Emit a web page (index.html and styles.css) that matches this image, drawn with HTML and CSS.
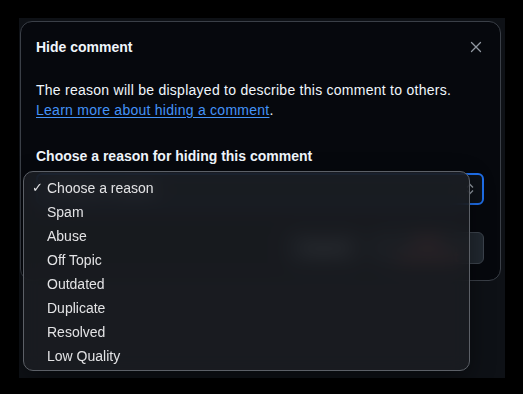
FILE: index.html
```html
<!DOCTYPE html>
<html>
<head>
<meta charset="utf-8">
<link rel="stylesheet" href="styles.css">
</head>
<body>
<div class="screen">
  <div class="dialog">
    <div class="dialog-header">
      <h2 class="dialog-title">Hide comment</h2>
      <button class="close-btn" aria-label="Close">
        <svg width="12" height="12" viewBox="0 0 12 12"><path d="M1.5 1.5 L10.5 10.5 M10.5 1.5 L1.5 10.5" stroke="#9198a1" stroke-width="1.3" stroke-linecap="round" fill="none"/></svg>
      </button>
    </div>
    <div class="dialog-body">
      <p class="desc">The reason will be displayed to describe this comment to others.<br><a href="#" class="link">Learn more about hiding a comment</a>.</p>
      <label class="field-label">Choose a reason for hiding this comment</label>
      <div class="select">
        <span class="select-text">Choose a reason</span>
        <svg class="select-arrows" width="8" height="12" viewBox="0 0 8 12"><path d="M1 4.5 L4 1.5 L7 4.5 M1 7.5 L4 10.5 L7 7.5" stroke="#9198a1" stroke-width="1.3" fill="none"/></svg>
      </div>
    </div>
    <div class="dialog-footer">
      <button class="btn">Cancel</button>
      <button class="btn btn-danger">Hide comment</button>
    </div>
  </div>
  <div class="menu">
    <div class="menu-item checked"><span class="check">✓</span>Choose a reason</div>
    <div class="menu-item">Spam</div>
    <div class="menu-item">Abuse</div>
    <div class="menu-item">Off Topic</div>
    <div class="menu-item">Outdated</div>
    <div class="menu-item">Duplicate</div>
    <div class="menu-item">Resolved</div>
    <div class="menu-item">Low Quality</div>
  </div>
</div>
</body>
</html>
```
FILE: styles.css
```css
* { box-sizing: border-box; }
html, body {
  margin: 0;
  padding: 0;
  background: #000;
  width: 523px;
  height: 394px;
  overflow: hidden;
  font-family: "Liberation Sans", Arial, sans-serif;
}
.screen {
  position: relative;
  margin: 18px 0 0 19px;
  width: 486px;
  height: 360px;
  background: #0e1116;
  padding: 3px 0 0 1px;
}
.dialog {
  width: 481px;
  height: 260px;
  background: #06080d;
  border: 1px solid #3a3f47;
  border-radius: 12px;
  display: flex;
  flex-direction: column;
}
.dialog-header {
  display: flex;
  align-items: center;
  justify-content: space-between;
  padding: 15px 14px 0 15px;
}
.dialog-title {
  margin: 0;
  font-size: 14px;
  line-height: 20px;
  font-weight: bold;
  color: #f0f6fc;
}
.close-btn {
  background: none;
  border: 0;
  padding: 0;
  width: 20px;
  height: 20px;
  display: flex;
  align-items: center;
  justify-content: center;
}
.dialog-body {
  padding: 23px 16px 0 15px;
}
.desc {
  margin: 0;
  font-size: 14px;
  line-height: 20px;
  letter-spacing: 0.26px;
  color: #f0f6fc;
}
.link {
  color: #4493f8;
  text-decoration: underline;
  text-underline-offset: 2px;
}
.field-label {
  display: block;
  margin-top: 26px;
  font-size: 14px;
  line-height: 20px;
  font-weight: bold;
  color: #f0f6fc;
}
.select {
  margin-top: 7px;
  height: 32px;
  border: 2px solid #1f6feb;
  border-radius: 6px;
  background: #0d1117;
  display: flex;
  align-items: center;
  justify-content: space-between;
  padding: 0 8px 0 12px;
  font-size: 14px;
  color: #f0f6fc;
}
.dialog-footer {
  margin-top: 27px;
  display: flex;
  justify-content: flex-end;
  gap: 8px;
  padding: 0 16px;
}
.btn {
  height: 32px;
  padding: 0 14px;
  border-radius: 6px;
  border: 1px solid #3d444d;
  background: #212830;
  color: #f0f6fc;
  font-family: "Liberation Sans", Arial, sans-serif;
  font-size: 14px;
  font-weight: bold;
}
.btn-danger {
  color: #f85149;
  width: 114px;
}
.menu {
  position: absolute;
  left: 4px;
  top: 153px;
  width: 447px;
  height: 200px;
  border: 1px solid #5c6067;
  border-radius: 10px;
  background: rgba(27, 29, 34, 0.86);
  backdrop-filter: blur(9px);
  padding-top: 4px;
  box-shadow: 0 8px 24px rgba(0,0,0,0.4);
}
.menu-item {
  position: relative;
  height: 24px;
  line-height: 24px;
  padding-left: 23px;
  font-size: 14px;
  color: #e3e3e5;
}
.check {
  position: absolute;
  left: 8px;
  top: 0;
  font-size: 13px;
}
```
